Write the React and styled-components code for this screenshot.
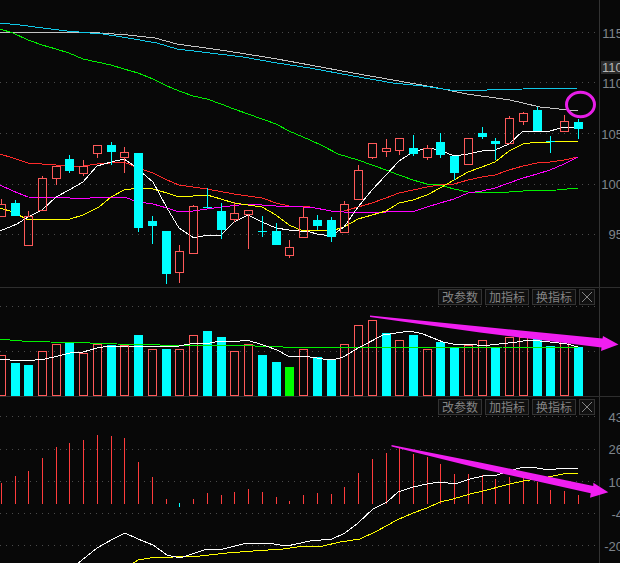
import React from 'react'
import styled, { createGlobalStyle } from 'styled-components'

const PLOT_WIDTH = 599
const RED = '#ff5a5a'
const CYAN = '#00ffff'

// x, kind (r = hollow red, c = cyan), body top, body bottom, high, low
const candles = [
  [1.5, 'r', 204, 217, 199, 217], [15.5, 'c', 203, 216, 200, 216], [28.5, 'r', 216, 246, 211, 246],
  [42.5, 'r', 178, 211, 176, 211], [56.5, 'r', 166, 179, 166, 185], [69.5, 'c', 159, 171, 155, 173],
  [83.5, 'r', 166, 174, 160, 176], [97.5, 'r', 145, 154, 145, 158], [111.5, 'c', 145, 152, 142, 165],
  [124.5, 'r', 152, 158, 147, 173], [138.5, 'c', 153, 228, 153, 232], [152.5, 'c', 221, 226, 216, 244],
  [166.5, 'c', 231, 274, 231, 284], [179.5, 'r', 251, 273, 245, 283], [193.5, 'r', 206, 254, 205, 254],
  [207.5, 'c', 206.5, 207.5, 188, 208], [221.5, 'c', 211, 230, 203, 239], [234.5, 'r', 213, 220, 202, 222],
  [248.5, 'r', 210, 215, 210, 249], [262.5, 'c', 230.5, 231.5, 216, 237], [276.5, 'c', 231, 245, 223, 245],
  [289.5, 'r', 247, 256, 240, 258], [303.5, 'r', 217, 238, 207, 238], [317.5, 'c', 220, 226, 215, 230],
  [331.5, 'c', 220, 237, 217, 242], [344.5, 'r', 204, 233, 201, 233], [358.5, 'r', 170, 200, 165, 200],
  [372.5, 'r', 143, 158, 143, 159], [386.5, 'r', 148, 152, 139, 157], [399.5, 'r', 138, 151, 138, 155],
  [413.5, 'c', 148, 154, 135, 156], [427.5, 'r', 148, 158, 145, 160], [440.5, 'c', 142, 155, 133, 158],
  [454.5, 'c', 156, 173, 156, 180], [468.5, 'r', 138, 165, 138, 165], [482.5, 'c', 133, 137, 127, 139],
  [495.5, 'c', 141, 144, 138, 160], [509.5, 'r', 118, 144, 116, 144], [523.5, 'r', 113, 122, 112, 125],
  [537.5, 'c', 110, 131, 107, 131], [550.5, 'c', 140.5, 141.5, 136, 153], [564.5, 'r', 121, 132, 115, 132],
  [578.5, 'c', 122, 129, 119, 139],
]

const priceLines = [
  { color: '#c4c4c4', points: '0,32 48,32 80,32 100,33 128,35 155,38 177,44 213,49 240,53 277,59 310,65 353,73 393,80 433,87 467,94 510,100 540,107 578,111' },
  { color: '#10c8e8', points: '0,23 20,25 43,28 67,31 90,33 103,34 128,38 157,43 177,49 210,53 243,57 277,63 310,68 353,76 393,83 423,86 450,90 487,90 523,89 578,88' },
  { color: '#00f000', points: '0,29 13,33 28,40 42,45 56,49 69,53 83,59 97,62 111,65 124,69 138,73 153,79 167,86 179,91 193,96 207,99 221,104 234,109 248,114 262,119 276,124 289,131 310,140 323,146 338,154 358,160 372,165 386,170 399,175 413,180 427,184 440,185 454,189 468,192 482,192 495,193 509,192 523,191 557,190 578,188' },
  { color: '#ff2a2a', points: '0,154 13,158 28,163 42,164 70,166 83,166 97,164 124,162 138,168 153,173 167,180 179,185 207,189 234,194 248,196 262,198 276,203 289,206 310,207 331,211 344,211 358,207 372,203 386,198 399,193 413,190 427,187 440,185 454,184 468,180 482,177 495,175 509,170 523,166 537,163 550,162 564,160 578,157' },
  { color: '#ff00ff', points: '0,185 13,191 28,197 70,198 83,199 97,197 124,197 138,202 153,204 167,208 179,212 193,211 207,209 221,207 248,204 276,206 303,207 310,207 331,211 344,212 386,212 415,211 427,207 440,203 454,199 468,193 482,191 495,188 509,183 523,178 537,174 550,170 564,164 578,157' },
  { color: '#ffff00', points: '0,208 13,212 28,220 42,219 70,219 83,215 99,207 111,197 124,190 138,188 153,189 167,193 179,197 193,196 207,195 221,199 234,203 248,205 262,207 276,215 289,225 303,231 317,230 331,231 344,227 358,219 372,215 386,211 399,203 413,200 427,195 440,188 454,180 468,172 482,167 495,162 509,151 523,144 537,142 550,142 564,141 578,141' },
  { color: '#ffffff', points: '0,231 17,224 28,217 42,210 56,197 69,190 83,182 97,166 111,162 124,159 133,165 153,182 167,208 179,228 194,238 207,235 221,235 234,222 248,215 262,222 276,228 289,230 310,232 317,234 331,236 344,227 358,207 372,190 386,175 399,161 413,152 427,148 440,150 454,156 468,154 482,151 495,150 509,144 523,131 537,131 550,131 564,127 578,128' },
]

// pane coordinates: y = 0 at the top of the pane (288 on the page)
const volumeBars = [
  [1.5, 'r', 67], [15.5, 'c', 75], [28.5, 'c', 77], [42.5, 'r', 63], [56.5, 'r', 56], [69.5, 'c', 54],
  [83.5, 'r', 65], [97.5, 'r', 56], [111.5, 'c', 57], [124.5, 'r', 57], [138.5, 'c', 47], [152.5, 'r', 61],
  [166.5, 'c', 61], [179.5, 'r', 61], [193.5, 'r', 47], [207.5, 'c', 43], [221.5, 'c', 49], [234.5, 'r', 63],
  [248.5, 'r', 56], [262.5, 'c', 67], [276.5, 'c', 74], [289.5, 'g', 79], [303.5, 'r', 61], [317.5, 'c', 69],
  [331.5, 'c', 72], [344.5, 'r', 56], [358.5, 'r', 37], [372.5, 'r', 32], [386.5, 'c', 45], [399.5, 'r', 52],
  [413.5, 'c', 47], [427.5, 'r', 61], [440.5, 'c', 54], [454.5, 'c', 60], [468.5, 'r', 57], [482.5, 'r', 52],
  [495.5, 'c', 59], [509.5, 'r', 49], [523.5, 'r', 49], [537.5, 'c', 51], [550.5, 'c', 58], [564.5, 'r', 53],
  [578.5, 'c', 59],
]

const volumeLines = [
  { color: '#00f000', points: '0,51 10,52 22,53 50,54 90,55 117,56 160,57 227,57 283,59 310,59 443,59 467,60 503,59 578,59' },
  { color: '#ffffff', points: '0,71 10,72 35,72 45,71 58,68 70,65 83,64 97,60 110,58 128,58 173,59 190,56 210,55 220,53 240,53 247,52 263,57 277,62 288,68 310,69 323,71 333,72 343,69 360,59 383,47 410,43 423,46 443,54 453,56 477,57 490,57 517,54 530,52 550,54 567,56 578,59' },
]

// page y minus 396
const macdBars = [
  [1.5, 86], [15.5, 79], [28.5, 74], [42.5, 61], [56.5, 50], [69.5, 46], [83.5, 43], [97.5, 38], [111.5, 39],
  [124.5, 41], [138.5, 65], [152.5, 80], [166.5, 102], [193.5, 102], [207.5, 96], [221.5, 98], [234.5, 95],
  [248.5, 92], [262.5, 95], [276.5, 100], [289.5, 104], [303.5, 98], [317.5, 96], [331.5, 97], [344.5, 90],
  [358.5, 76], [372.5, 62], [386.5, 56], [399.5, 51], [413.5, 57], [427.5, 60], [440.5, 67], [454.5, 77],
  [468.5, 77], [482.5, 78], [495.5, 82], [509.5, 80], [523.5, 81], [537.5, 85], [550.5, 93], [564.5, 94],
  [578.5, 98],
]

const macdLines = [
  { color: '#ffff00', points: '130,168 138,163 150,161 173,160 200,159 227,156 253,154 283,152 297,150 310,149 323,149 340,145 360,142 377,134 397,123 413,116 427,111 440,105 453,102 470,97 483,94 510,87 523,84 543,81 563,77 578,76' },
  { color: '#ffffff', points: '77,167 97,151 113,142 125,136 138,142 153,148 167,158 180,161 207,152 223,152 247,146 267,146 287,149 310,144 332,142 345,136 358,126 373,112 387,105 398,95 413,90 427,87 440,85 455,87 470,82 483,79 497,78 513,73 523,70 530,70 550,73 563,71 578,72' },
]

const GlobalStyle = createGlobalStyle`
  html, body {
    margin: 0;
    background: #080808;
    overflow: hidden;
  }
`

const Page = styled.div`
  position: relative;
  width: 620px;
  height: 563px;
  overflow: hidden;
  background: #080808;
  font-family: 'Liberation Sans', Arial, sans-serif;
`

const Pane = styled.section`
  display: flex;
  height: ${p => p.$height}px;
  box-sizing: border-box;
  border-bottom: ${p => (p.$last ? 'none' : '1px solid #2e2e2e')};
`

const PlotArea = styled.div`
  position: relative;
  flex: none;
  width: ${PLOT_WIDTH}px;
`

const PlotSvg = styled.svg`
  display: block;
  width: ${PLOT_WIDTH}px;
  height: 100%;
`

const Axis = styled.div`
  position: relative;
  flex: 1;
  display: flex;
  flex-direction: column;
  padding-top: ${p => p.$top}px;
  border-left: 1px solid #333;
  color: #7f858c;
  font-size: 13px;
`

const AxisLabel = styled.div`
  flex: none;
  height: ${p => p.$step}px;
  margin-right: -3px;
  line-height: ${p => p.$step}px;
  text-align: right;
  white-space: nowrap;
`

const PriceBadge = styled.div`
  position: absolute;
  top: 61px;
  left: 1px;
  right: 0;
  height: 13px;
  padding-left: 1px;
  background: #2b2b2b;
  color: #b4b4b4;
  font-size: 13px;
  line-height: 13px;
  white-space: nowrap;
`

const Toolbar = styled.div`
  position: absolute;
  top: ${p => p.$top}px;
  right: 4px;
  display: flex;
  gap: 3px;
`

const ToolButton = styled.button`
  box-sizing: border-box;
  width: ${p => (p.$icon ? 16 : 44)}px;
  height: 16px;
  margin: 0;
  padding: 0;
  display: flex;
  align-items: center;
  justify-content: center;
  border: 1px solid #333;
  background: #101010;
  color: #848484;
  font-family: 'Noto Sans CJK SC', sans-serif;
  font-size: 12px;
  line-height: 14px;
`

const Annotations = styled.svg`
  position: absolute;
  inset: 0;
  width: 620px;
  height: 563px;
  pointer-events: none;
`

const Grid = ({ lines }) =>
  lines.map(y => (
    <line key={y} x1="0" x2={PLOT_WIDTH} y1={y} y2={y} stroke="#4a4a4a" strokeDasharray="1 5" />
  ))

const Lines = ({ lines }) =>
  lines.map(l => (
    <polyline key={l.color} points={l.points} fill="none" stroke={l.color} strokeWidth="1" shapeRendering="crispEdges" />
  ))

const Candle = ({ x, kind, top, bottom, high, low }) => {
  const color = kind === 'c' ? CYAN : RED
  return (
    <g shapeRendering="crispEdges">
      <line x1={x} x2={x} y1={high} y2={top} stroke={color} />
      <line x1={x} x2={x} y1={bottom} y2={low} stroke={color} />
      {kind === 'c' ? (
        <rect x={x - 4.5} y={top} width="9" height={bottom - top} fill={color} />
      ) : (
        <rect x={x - 4} y={top + 0.5} width="8" height={bottom - top - 1} fill="none" stroke={color} />
      )}
    </g>
  )
}

const VolumeBar = ({ x, kind, top, base }) => {
  if (kind === 'r') {
    return <rect x={x - 4} y={top + 0.5} width="8" height={base - top} fill="none" stroke={RED} shapeRendering="crispEdges" />
  }
  return <rect x={x - 4.5} y={top} width="9" height={base - top + 1} fill={kind === 'g' ? '#00ff00' : CYAN} />
}

const ChartTools = ({ top }) => (
  <Toolbar $top={top}>
    <ToolButton>改参数</ToolButton>
    <ToolButton>加指标</ToolButton>
    <ToolButton>换指标</ToolButton>
    <ToolButton $icon aria-label="关闭">
      <svg width="12" height="12" viewBox="0 0 12 12">
        <path d="M1 1 L11 11 M11 1 L1 11" stroke="#848484" fill="none" />
      </svg>
    </ToolButton>
  </Toolbar>
)

const App = () => (
  <Page>
    <GlobalStyle />
    <Pane $height={288}>
      <PlotArea>
        <PlotSvg>
          <Grid lines={[32.5, 82.5, 133.5, 184.5, 234.5]} />
          <Lines lines={priceLines} />
          {candles.map(([x, kind, top, bottom, high, low]) => (
            <Candle key={x} x={x} kind={kind} top={top} bottom={bottom} high={high} low={low} />
          ))}
        </PlotSvg>
      </PlotArea>
      <Axis $top={9}>
        {['115', '110', '105', '100', '95'].map(v => (
          <AxisLabel key={v} $step={50.25}>{v}</AxisLabel>
        ))}
        <PriceBadge>110</PriceBadge>
      </Axis>
    </Pane>
    <Pane $height={109}>
      <PlotArea>
        <PlotSvg>
          <Grid lines={[18.5, 63.5]} />
          {volumeBars.map(([x, kind, top]) => (
            <VolumeBar key={x} x={x} kind={kind} top={top} base={107} />
          ))}
          <Lines lines={volumeLines} />
        </PlotSvg>
        <ChartTools top={1} />
      </PlotArea>
      <Axis $top={0} />
    </Pane>
    <Pane $height={166} $last>
      <PlotArea>
        <PlotSvg>
          <Grid lines={[19.5, 52.5, 84.5, 116.5, 148.5]} />
          {macdBars.map(([x, top]) => (
            <line key={x} x1={x} x2={x} y1={top} y2="107" stroke="#ff3c3c" shapeRendering="crispEdges" />
          ))}
          <line x1="179.5" x2="179.5" y1="106" y2="110" stroke={CYAN} shapeRendering="crispEdges" />
          <Lines lines={macdLines} />
        </PlotSvg>
        <ChartTools top={2} />
      </PlotArea>
      <Axis $top={5}>
        {['43', '26', '10', '-4', '-20'].map(v => (
          <AxisLabel key={v} $step={32.25}>{v}</AxisLabel>
        ))}
      </Axis>
    </Pane>
    <Annotations viewBox="0 0 620 563">
      <ellipse cx="580.5" cy="104.5" rx="14" ry="12.3" fill="none" stroke="#e81ee8" strokeWidth="3" />
      <polygon points="370,315.5 480,326.5 602.5,338.5 603,336 618.5,344.5 601,351 601.5,347.5 480,332.5 370,317" fill="#f01ef0" />
      <polygon points="391.5,445 480,462.5 593.3,486 593.3,482.7 608.3,492.3 590,497.7 590.7,493.3 480,468.5 391.5,446.5" fill="#f01ef0" />
    </Annotations>
  </Page>
)

export default App
